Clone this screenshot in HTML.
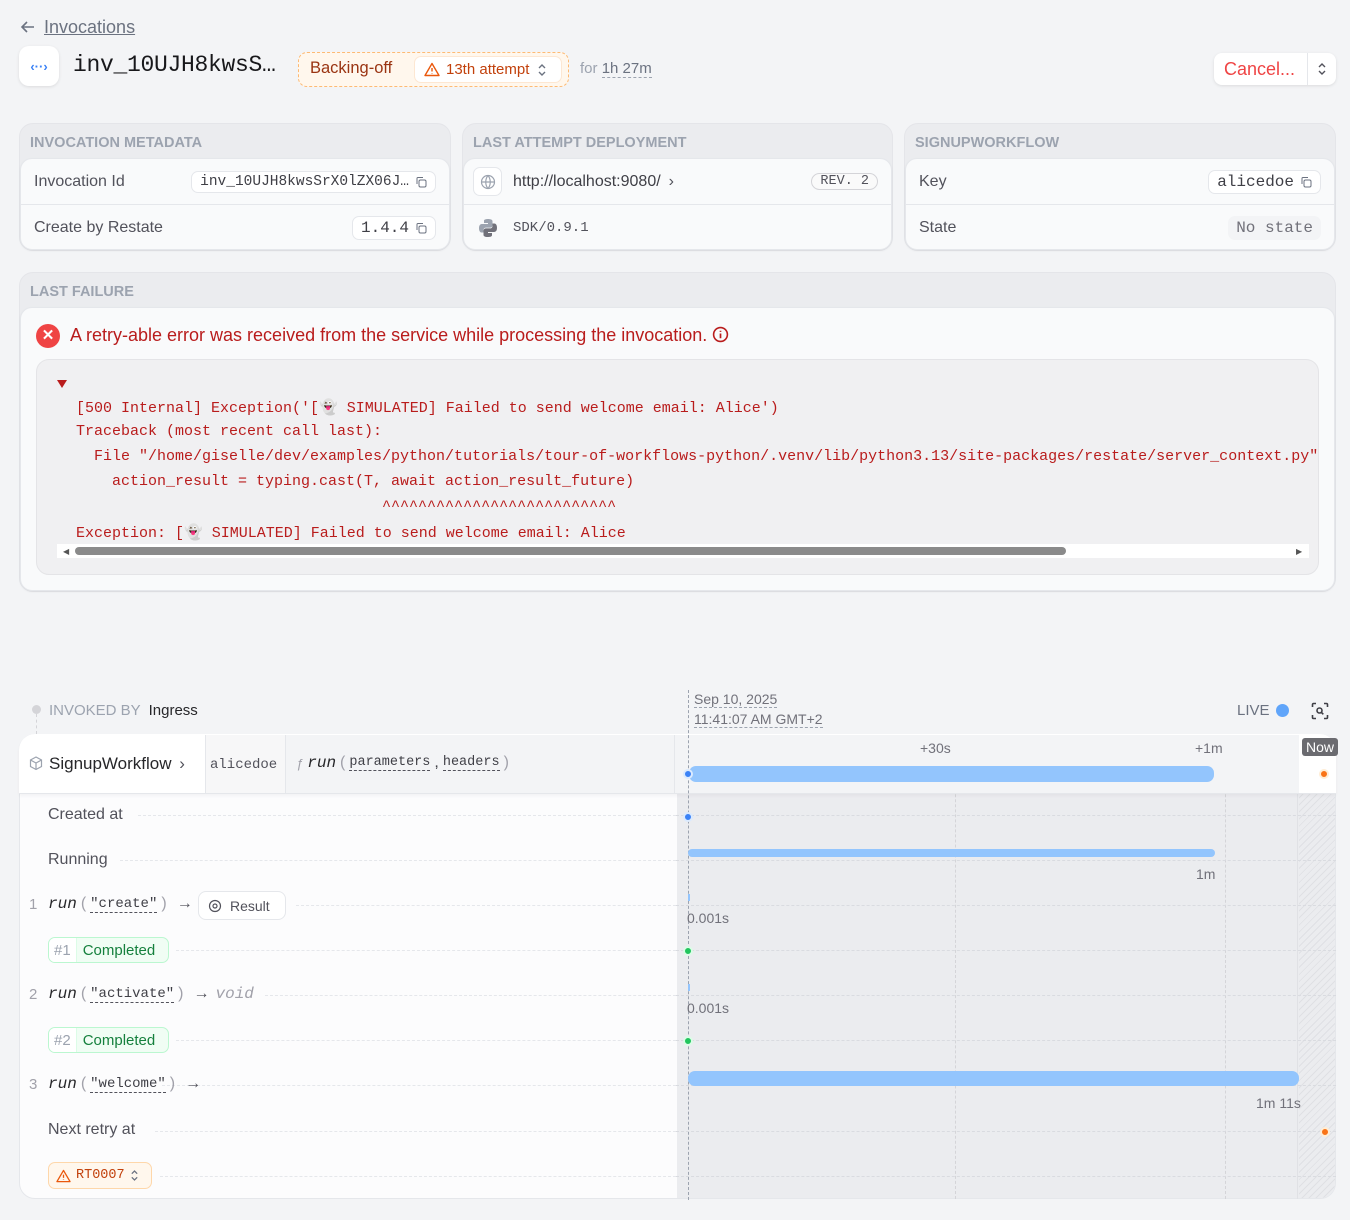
<!DOCTYPE html>
<html><head><meta charset="utf-8"><style>
*{box-sizing:border-box;margin:0;padding:0}
body{width:1350px;height:1220px;background:#f3f4f6;font-family:"Liberation Sans",sans-serif;color:#3f3f46;position:relative;overflow:hidden}
.a{position:absolute}
.mono{font-family:"Liberation Mono",monospace}
.card{position:absolute;background:#ebecef;border-radius:14px;border:1px solid #e4e5e9}
.card .h{position:absolute;left:10px;top:11px;font-size:14.5px;color:#9ca3af;font-weight:bold;letter-spacing:0}
.card .in{position:absolute;left:0;right:0;top:34px;bottom:0;background:#f9fafb;border-radius:12px;border:1px solid #e5e7eb;box-shadow:0 1px 2px rgba(0,0,0,.05)}
.row{position:absolute;left:0;right:0;height:46px;display:flex;align-items:center;padding:0 13px;font-size:16px;color:#52525b}
.pill{border:1px solid #e5e7eb;border-radius:7px;background:#fff;padding:2px 8px;font-family:"Liberation Mono",monospace;font-size:15px;color:#3f3f46;display:flex;align-items:center;gap:6px}
.dash{border-bottom:1px dashed #9ca3af}
.code{font-family:"Liberation Mono",monospace;font-size:15px;color:#b91c1c;white-space:pre;position:absolute;left:76px}
.lbl{position:absolute;font-size:16px;color:#52525b}
.dl{position:absolute;left:20px;width:656px;border-top:1px dashed #e5e7eb}
.dl2{position:absolute;left:676px;width:660px;border-top:1px dashed #d9dbe0}
.fn{font-family:"Liberation Mono",monospace;font-style:italic;font-size:16px;color:#27272a}
.par{color:#a1a1aa;font-size:16px}
.arg{font-family:"Liberation Mono",monospace;font-size:14px;color:#3f3f46;border-bottom:1px dashed #52525b}
.dot{position:absolute;width:10px;height:10px;border-radius:50%;border:2px solid #dbeafe;background:#3b82f6}
.st{position:absolute;left:48px;height:26px;border:1px solid #bbf7d0;border-radius:7px;background:#f0fdf4;display:flex;align-items:center;font-size:15px;color:#15803d;overflow:hidden}
.st span{background:#fff;color:#9ca3af;padding:0 5px;height:100%;display:flex;align-items:center;border-right:1px solid #dcfce7;margin-right:6px}
</style></head><body>

<div class="a" style="left:20px;top:17px;font-size:18px;color:#6b7280">
<svg width="16" height="16" viewBox="0 0 16 16" style="vertical-align:-2px"><path d="M14 8H2M7 3L2 8l5 5" stroke="#6b7280" stroke-width="1.6" fill="none"/></svg>
<span style="text-decoration:underline;margin-left:3px">Invocations</span></div>

<div class="a" style="left:19px;top:46px;width:40px;height:40px;background:#fff;border-radius:10px;box-shadow:0 1px 3px rgba(0,0,0,.1);display:flex;align-items:center;justify-content:center;color:#3b82f6;font-size:13px;font-weight:bold">‹··›</div>
<div class="a mono" style="left:73px;top:52px;font-size:23px;color:#18181b;letter-spacing:-.3px">inv_10UJH8kwsS…</div>
<div class="a" style="left:298px;top:52px;width:271px;height:35px;border:1px dashed #fdba74;background:#fff7ed;border-radius:9px"></div>
<div class="a" style="left:310px;top:59px;font-size:16.5px;color:#9a3412">Backing-off</div>
<div class="a" style="left:414px;top:56px;width:148px;height:27px;background:#fff;border:1px solid #fde7d2;border-radius:7px;display:flex;align-items:center;padding-left:9px;font-size:15px;color:#c2410c">
<svg width="16" height="15" viewBox="0 0 16 15"><path d="M8 1.5L15 13.5H1z" fill="none" stroke="#ea580c" stroke-width="1.4" stroke-linejoin="round"/><path d="M8 6v3.5M8 11v.5" stroke="#ea580c" stroke-width="1.4"/></svg>
<span style="margin-left:6px">13th attempt</span>
<svg width="10" height="14" viewBox="0 0 10 14" style="margin-left:8px"><path d="M2 5l3-3 3 3M2 9l3 3 3-3" fill="none" stroke="#6b7280" stroke-width="1.4"/></svg></div>
<div class="a" style="left:580px;top:60px;font-size:15px;color:#9ca3af">for <span class="dash" style="color:#6b7280">1h 27m</span></div>

<div class="a" style="left:1214px;top:53px;width:122px;height:32px;background:#fff;border-radius:8px;box-shadow:0 1px 3px rgba(0,0,0,.1);font-size:18px;color:#ef4444;display:flex;align-items:center">
<span style="padding-left:10px;width:93px">Cancel...</span>
<span style="border-left:1px solid #e5e7eb;height:100%;flex:1;display:flex;align-items:center;justify-content:center"><svg width="10" height="14" viewBox="0 0 10 14"><path d="M2 5l3-3 3 3M2 9l3 3 3-3" fill="none" stroke="#52525b" stroke-width="1.4"/></svg></span></div>

<div class="card" style="left:19px;top:123px;width:432px;height:128px"><div class="h">INVOCATION METADATA</div>
<div class="in">
<div class="row" style="top:0;border-bottom:1px solid #e5e7eb;justify-content:space-between"><span>Invocation Id</span><span class="pill" style="font-size:14.5px">inv_10UJH8kwsSrX0lZX06J… <svg width="12" height="12" viewBox="0 0 12 12"><rect x="4" y="4" width="7" height="7" rx="1.5" fill="none" stroke="#6b7280"/><path d="M2 8V2.5C2 2 2.5 1.5 3 1.5H8" fill="none" stroke="#6b7280"/></svg></span></div>
<div class="row" style="top:46px;justify-content:space-between"><span>Create by Restate</span><span class="pill" style="font-size:16px">1.4.4 <svg width="12" height="12" viewBox="0 0 12 12"><rect x="4" y="4" width="7" height="7" rx="1.5" fill="none" stroke="#6b7280"/><path d="M2 8V2.5C2 2 2.5 1.5 3 1.5H8" fill="none" stroke="#6b7280"/></svg></span></div>
</div></div>

<div class="card" style="left:462px;top:123px;width:431px;height:128px"><div class="h">LAST ATTEMPT DEPLOYMENT</div>
<div class="in">
<div class="row" style="top:0;border-bottom:1px solid #e5e7eb;padding-left:9px"><span style="width:29px;height:29px;background:#fff;border:1px solid #e5e7eb;border-radius:7px;display:flex;align-items:center;justify-content:center"><svg width="16" height="16" viewBox="0 0 16 16" fill="none" stroke="#9ca3af" stroke-width="1.2"><circle cx="8" cy="8" r="6.5"/><path d="M1.5 8h13M8 1.5c-3 3.5-3 9.5 0 13M8 1.5c3 3.5 3 9.5 0 13"/></svg></span><span style="margin-left:11px;color:#3f3f46">http://localhost:9080/</span><span style="margin-left:8px;color:#52525b">›</span><span style="margin-left:auto;border:1px solid #d4d4d8;border-radius:10px;padding:0 8px;font-family:'Liberation Mono',monospace;font-size:13.5px;color:#52525b;background:#fafafa">REV. 2</span></div>
<div class="row" style="top:46px;padding-left:14px"><svg width="20" height="20" viewBox="0 0 20 20"><path d="M9.8 1C5.5 1 6 3 6 3v2h4v1H4S1 5.7 1 10.2 3.7 14.5 3.7 14.5H5.5v-2.2S5.3 9.6 8 9.6h4s2.5 0 2.5-2.4V3.3S15 1 9.8 1z" fill="#9ca3af"/><path d="M10.2 19c4.3 0 3.8-2 3.8-2v-2h-4v-1h6s3 .3 3-4.2-2.7-4.3-2.7-4.3h-1.8v2.2s.2 2.7-2.5 2.7H8s-2.5 0-2.5 2.4v3.9S5 19 10.2 19z" fill="#71717a"/></svg><span class="mono" style="margin-left:15px;font-size:14px;color:#52525b">SDK/0.9.1</span></div>
</div></div>

<div class="card" style="left:904px;top:123px;width:432px;height:128px"><div class="h">SIGNUPWORKFLOW</div>
<div class="in">
<div class="row" style="top:0;border-bottom:1px solid #e5e7eb;justify-content:space-between"><span>Key</span><span class="pill" style="font-size:16px">alicedoe <svg width="12" height="12" viewBox="0 0 12 12"><rect x="4" y="4" width="7" height="7" rx="1.5" fill="none" stroke="#6b7280"/><path d="M2 8V2.5C2 2 2.5 1.5 3 1.5H8" fill="none" stroke="#6b7280"/></svg></span></div>
<div class="row" style="top:46px;justify-content:space-between"><span>State</span><span class="mono" style="background:#f3f4f6;border-radius:7px;padding:3px 8px;font-size:16px;color:#71717a">No state</span></div>
</div></div>

<div class="card" style="left:19px;top:272px;width:1317px;height:320px"><div class="h">LAST FAILURE</div>
<div class="in" style="top:34px"></div></div>
<div class="a" style="left:36px;top:324px;width:24px;height:24px;border-radius:50%;background:#ef4444;color:#fff;font-size:15px;font-weight:bold;text-align:center;line-height:24px">✕</div>
<div class="a" style="left:70px;top:325px;font-size:18px;color:#b91c1c;white-space:nowrap">A retry-able error was received from the service while processing the invocation.
<svg width="17" height="17" viewBox="0 0 16 16" style="vertical-align:-2px"><circle cx="8" cy="8" r="6.5" fill="none" stroke="#b91c1c" stroke-width="1.5"/><path d="M8 7v4.5M8 4.5v1" stroke="#b91c1c" stroke-width="1.6"/></svg></div>
<div class="a" style="left:36px;top:359px;width:1283px;height:216px;background:#f0f0f2;border:1px solid #e4e4e7;border-radius:13px;overflow:hidden">
<div class="a" style="left:20px;top:20px;width:0;height:0;border-left:5px solid transparent;border-right:5px solid transparent;border-top:8px solid #b91c1c"></div>
<div class="code" style="top:38px;left:39px">[500 Internal] Exception('[👻 SIMULATED] Failed to send welcome email: Alice')</div>
<div class="code" style="top:63px;left:39px">Traceback (most recent call last):</div>
<div class="code" style="top:88px;left:39px">  File "/home/giselle/dev/examples/python/tutorials/tour-of-workflows-python/.venv/lib/python3.13/site-packages/restate/server_context.py", line</div>
<div class="code" style="top:113px;left:39px">    action_result = typing.cast(T, await action_result_future)</div>
<div class="code" style="top:138px;left:39px">                                  ^^^^^^^^^^^^^^^^^^^^^^^^^^</div>
<div class="code" style="top:163px;left:39px">Exception: [👻 SIMULATED] Failed to send welcome email: Alice</div>
<div class="a" style="left:20px;top:184px;width:1252px;height:14px;background:#fff"></div>
<div class="a" style="left:26px;top:187px;font-size:8px;color:#555">◀</div>
<div class="a" style="left:1259px;top:187px;font-size:8px;color:#555">▶</div>
<div class="a" style="left:38px;top:187px;width:991px;height:8px;background:#8a8a8a;border-radius:4px"></div>
</div>

<div class="a" style="left:32px;top:705px;width:9px;height:9px;border-radius:50%;background:#d4d4d8"></div>
<div class="a" style="left:36px;top:714px;height:20px;border-left:1px dashed #d4d4d8"></div>
<div class="a" style="left:49px;top:702px;font-size:15px;color:#9ca3af">INVOKED BY <span style="color:#27272a;margin-left:4px">Ingress</span></div>
<div class="a" style="left:694px;top:689px;font-size:14px;color:#71717a;line-height:20px"><span class="dash">Sep 10, 2025</span><br><span class="dash">11:41:07 AM GMT+2</span></div>
<div class="a" style="left:1237px;top:702px;font-size:15px;color:#6b7280">LIVE</div>
<div class="a" style="left:1276px;top:704px;width:13px;height:13px;border-radius:50%;background:#60a5fa"></div>
<svg class="a" style="left:1311px;top:702px" width="18" height="18" viewBox="0 0 18 18" fill="none" stroke="#3f3f46" stroke-width="1.6"><path d="M1.5 5V2.5a1 1 0 011-1H5M13 1.5h2.5a1 1 0 011 1V5M16.5 13v2.5a1 1 0 01-1 1H13M5 16.5H2.5a1 1 0 01-1-1V13"/><circle cx="8.5" cy="8.5" r="2.5"/><path d="M10.3 10.3l2 2"/></svg>

<div class="a" style="left:19px;top:734px;width:1317px;height:465px;background:#fcfcfd;border-radius:16px;border:1px solid #e5e7eb;overflow:hidden">
<div class="a" style="left:657px;top:0;width:660px;height:465px;background:#ebecef"></div>
<div class="a" style="left:1279px;top:0;width:38px;height:465px;background:repeating-linear-gradient(135deg,#ebecef 0 4px,#dfe0e4 4px 5px)"></div>
</div>
<div class="a" style="left:955px;top:734px;height:465px;border-left:1px dashed #d4d4d8"></div>
<div class="a" style="left:1225px;top:734px;height:465px;border-left:1px dashed #d4d4d8"></div>
<div class="a" style="left:1297px;top:734px;height:465px;border-left:1px solid #e0e1e5"></div>

<div class="a" style="left:19px;top:734px;width:1317px;height:60px;background:#fff;border-radius:16px 16px 0 0;border-bottom:1px solid #e5e7eb;box-shadow:0 2px 3px rgba(0,0,0,.04)"></div>
<div class="a" style="left:675px;top:735px;width:624px;height:58px;background:#f3f4f6"></div>
<div class="a" style="left:205px;top:735px;width:80px;height:58px;background:#f7f7f8;border-left:1px solid #e5e7eb"></div>
<div class="a" style="left:285px;top:735px;width:390px;height:58px;background:#f3f4f6;border-left:1px solid #e5e7eb;border-right:1px solid #e5e7eb"></div>
<svg class="a" style="left:29px;top:756px" width="14" height="15" viewBox="0 0 14 15" fill="none" stroke="#9ca3af" stroke-width="1.2"><path d="M7 1l5.5 3v6.5L7 13.5 1.5 10.5V4z"/><path d="M1.5 4L7 7l5.5-3M7 7v6.5"/></svg>
<div class="a" style="left:49px;top:754px;font-size:17px;color:#27272a">SignupWorkflow <span style="color:#52525b;margin-left:3px">›</span></div>
<div class="a mono" style="left:210px;top:757px;font-size:14px;color:#52525b">alicedoe</div>
<div class="a" style="left:296px;top:754px;display:flex;align-items:center;gap:4px"><span style="color:#a1a1aa;font-style:italic;font-size:13px">ƒ</span><span class="fn">run</span><span class="par">(</span><span class="arg" style="font-size:13.5px">parameters</span><span style="color:#3f3f46">,</span><span class="arg" style="font-size:13.5px">headers</span><span class="par">)</span></div>
<div class="a" style="left:920px;top:740px;font-size:14px;color:#71717a">+30s</div>
<div class="a" style="left:1195px;top:740px;font-size:14px;color:#71717a">+1m</div>
<div class="a" style="left:1302px;top:738px;background:#6b6b70;color:#fff;font-size:14px;padding:1px 4px;border-radius:3px">Now</div>
<div class="a" style="left:689px;top:766px;width:525px;height:16px;border-radius:7px;background:#93c5fd"></div>

<div class="a" style="left:688px;top:690px;height:510px;border-left:1px dashed #9ca3af"></div>
<div class="dot" style="left:683px;top:769px"></div>
<div class="dot" style="left:1319px;top:769px;background:#f97316;border-color:#ffedd5"></div>

<div class="dl" style="top:815px;left:138px;width:538px"></div><div class="dl2" style="top:815px"></div>
<div class="lbl" style="left:48px;top:806px">Created at</div>
<div class="dot" style="left:683px;top:812px"></div>

<div class="dl" style="top:860px;left:120px;width:556px"></div><div class="dl2" style="top:860px"></div>
<div class="lbl" style="left:48px;top:851px">Running</div>
<div class="a" style="left:688px;top:849px;width:527px;height:8px;border-radius:4px;background:#93c5fd"></div>
<div class="a" style="left:1196px;top:866px;font-size:14px;color:#71717a">1m</div>

<div class="dl" style="top:905px;left:296px;width:380px"></div><div class="dl2" style="top:905px"></div>
<div class="a" style="left:29px;top:896px;font-size:15px;color:#a1a1aa">1</div>
<div class="a" style="left:48px;top:895px;display:flex;align-items:center;gap:4px"><span class="fn">run</span><span class="par">(</span><span class="arg">"create"</span><span class="par">)</span><span style="color:#52525b;margin-left:6px">→</span></div>
<div class="a" style="left:198px;top:891px;width:88px;height:29px;background:#fff;border:1px solid #e5e7eb;border-radius:8px;font-size:14px;color:#52525b;display:flex;align-items:center;padding-left:9px"><svg width="14" height="14" viewBox="0 0 14 14" fill="none" stroke="#52525b" stroke-width="1.2"><circle cx="7" cy="7" r="5.5"/><circle cx="7" cy="7" r="2"/></svg><span style="margin-left:8px">Result</span></div>
<div class="a" style="left:688px;top:894px;width:2px;height:7px;background:#93c5fd"></div>
<div class="a" style="left:687px;top:910px;font-size:14px;color:#71717a">0.001s</div>

<div class="dl" style="top:950px;left:176px;width:500px"></div><div class="dl2" style="top:950px"></div>
<div class="st" style="top:937px"><span>#1</span>Completed&nbsp;&nbsp;&nbsp;</div>
<div class="dot" style="left:683px;top:946px;background:#22c55e;border-color:#dcfce7"></div>

<div class="dl" style="top:995px;left:265px;width:411px"></div><div class="dl2" style="top:995px"></div>
<div class="a" style="left:29px;top:986px;font-size:15px;color:#a1a1aa">2</div>
<div class="a" style="left:48px;top:985px;display:flex;align-items:center;gap:4px"><span class="fn">run</span><span class="par">(</span><span class="arg">"activate"</span><span class="par">)</span><span style="color:#52525b;margin-left:6px">→</span><span class="mono" style="font-style:italic;color:#a1a1aa;font-size:16px;margin-left:2px">void</span></div>
<div class="a" style="left:688px;top:984px;width:2px;height:7px;background:#93c5fd"></div>
<div class="a" style="left:687px;top:1000px;font-size:14px;color:#71717a">0.001s</div>

<div class="dl" style="top:1040px;left:176px;width:500px"></div><div class="dl2" style="top:1040px"></div>
<div class="st" style="top:1027px"><span>#2</span>Completed&nbsp;&nbsp;&nbsp;</div>
<div class="dot" style="left:683px;top:1036px;background:#22c55e;border-color:#dcfce7"></div>

<div class="dl" style="top:1085px;left:162px;width:514px"></div><div class="dl2" style="top:1085px"></div>
<div class="a" style="left:29px;top:1076px;font-size:15px;color:#a1a1aa">3</div>
<div class="a" style="left:48px;top:1075px;display:flex;align-items:center;gap:4px"><span class="fn">run</span><span class="par">(</span><span class="arg">"welcome"</span><span class="par">)</span><span style="color:#52525b;margin-left:6px">→</span></div>
<div class="a" style="left:688px;top:1071px;width:611px;height:15px;border-radius:7px;background:#93c5fd"></div>
<div class="a" style="left:1256px;top:1095px;font-size:14px;color:#71717a">1m 11s</div>

<div class="dl" style="top:1131px;left:155px;width:521px"></div><div class="dl2" style="top:1131px"></div>
<div class="lbl" style="left:48px;top:1121px">Next retry at</div>
<div class="dot" style="left:1320px;top:1127px;background:#f97316;border-color:#ffedd5"></div>

<div class="dl" style="top:1176px;left:160px;width:516px"></div><div class="dl2" style="top:1176px"></div>
<div class="a" style="left:48px;top:1162px;width:104px;height:27px;background:#fff7ed;border:1px solid #fed7aa;border-radius:7px;display:flex;align-items:center;padding-left:7px;gap:5px"><svg width="15" height="14" viewBox="0 0 16 15"><path d="M8 1.5L15 13.5H1z" fill="none" stroke="#ea580c" stroke-width="1.4" stroke-linejoin="round"/><path d="M8 6v3.5M8 11v.5" stroke="#ea580c" stroke-width="1.4"/></svg><span class="mono" style="font-size:13.5px;color:#c2410c">RT0007</span><svg width="9" height="13" viewBox="0 0 10 14"><path d="M2 5l3-3 3 3M2 9l3 3 3-3" fill="none" stroke="#6b7280" stroke-width="1.4"/></svg></div>

</body></html>
